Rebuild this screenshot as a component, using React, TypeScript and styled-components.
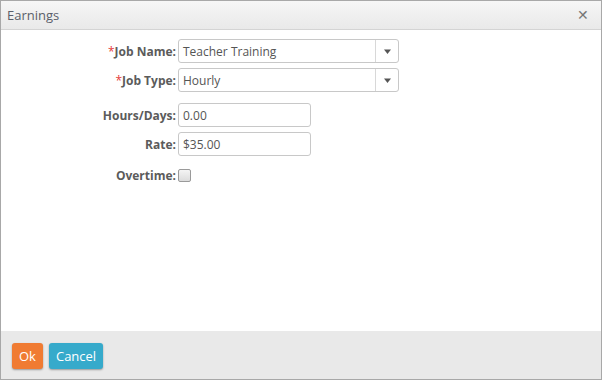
import React from 'react';
import styled, { createGlobalStyle } from 'styled-components';

const GlobalStyle = createGlobalStyle`
  html, body {
    margin: 0;
    padding: 0;
    background: #fff;
  }
  body {
    font-family: "Open Sans", "Liberation Sans", sans-serif;
  }
`;

const Dialog = styled.div`
  box-sizing: border-box;
  width: 602px;
  height: 380px;
  border: 1px solid #a8a8a8;
  display: flex;
  flex-direction: column;
  background: #fff;
`;

const Header = styled.div`
  height: 28px;
  flex: none;
  display: flex;
  align-items: center;
  padding: 0 12px 0 6px;
  background: linear-gradient(#f6f6f6, #e9e9e9);
  border-bottom: 1px solid #d4d4d4;
`;

const Title = styled.div`
  font-size: 13px;
  color: #5a5f6a;
  margin-right: auto;
`;

const Close = styled.div`
  font-size: 14px;
  color: #777;
  line-height: 1;
`;

const Body = styled.div`
  flex: 1;
  padding-top: 9px;
`;

const Form = styled.div`
  display: grid;
  grid-template-columns: 175px auto;
  column-gap: 2px;
  align-items: center;
`;

const Label = styled.label<{ $gap?: number }>`
  text-align: right;
  font-size: 12px;
  font-weight: 700;
  color: #5b5b5b;
  margin-top: ${(p) => p.$gap ?? 0}px;
`;

const Req = styled.span`
  color: #e53a3a;
  font-weight: 400;
`;

const Cell = styled.div<{ $gap?: number }>`
  display: flex;
  margin-top: ${(p) => p.$gap ?? 0}px;
`;

const Select = styled.div`
  box-sizing: border-box;
  width: 221px;
  height: 24px;
  border: 1px solid #c8c8c8;
  border-radius: 3px;
  display: flex;
  align-items: stretch;
  background: #fff;
`;

const SelectText = styled.div`
  flex: 1;
  font-size: 12px;
  color: #555;
  padding-left: 4px;
  display: flex;
  align-items: center;
`;

const Arrow = styled.div`
  width: 22px;
  border-left: 1px solid #d8d8d8;
  display: flex;
  align-items: center;
  justify-content: center;
`;

const Input = styled.div`
  box-sizing: border-box;
  width: 133px;
  height: 24px;
  border: 1px solid #c8c8c8;
  border-radius: 3px;
  font-size: 12px;
  color: #555;
  padding-left: 4px;
  display: flex;
  align-items: center;
`;

const Check = styled.div`
  box-sizing: border-box;
  width: 13px;
  height: 13px;
  border: 1px solid #9a9a9a;
  border-radius: 2px;
  background: linear-gradient(#f4f4f4, #dcdcdc);
`;

const Footer = styled.div`
  height: 48px;
  flex: none;
  background: #e9e9e9;
  display: flex;
  align-items: center;
  gap: 6px;
  padding: 0 11px;
`;

const Button = styled.button<{ $color: string }>`
  height: 26px;
  border: none;
  border-radius: 3px;
  background: ${(p) => p.$color};
  color: #fff;
  font-family: "Open Sans", "Liberation Sans", sans-serif;
  font-size: 13px;
  font-weight: 400;
  padding: 0 7px;
  box-shadow: 0 1px 2px rgba(0, 0, 0, 0.35);
  margin-top: 2px;
`;

const Caret = () => (
  <svg width="7" height="5" viewBox="0 0 7 5">
    <path d="M0 0.5h7L3.5 5z" fill="#555" />
  </svg>
);

export default function App() {
  return (
    <>
      <GlobalStyle />
      <Dialog>
        <Header>
          <Title>Earnings</Title>
          <Close>✕</Close>
        </Header>
        <Body>
          <Form>
            <Label>
              <Req>*</Req>Job Name:
            </Label>
            <Cell>
              <Select>
                <SelectText>Teacher Training</SelectText>
                <Arrow>
                  <Caret />
                </Arrow>
              </Select>
            </Cell>
            <Label $gap={5}>
              <Req>*</Req>Job Type:
            </Label>
            <Cell $gap={5}>
              <Select>
                <SelectText>Hourly</SelectText>
                <Arrow>
                  <Caret />
                </Arrow>
              </Select>
            </Cell>
            <Label $gap={11}>Hours/Days:</Label>
            <Cell $gap={11}>
              <Input>0.00</Input>
            </Cell>
            <Label $gap={5}>Rate:</Label>
            <Cell $gap={5}>
              <Input>$35.00</Input>
            </Cell>
            <Label $gap={11}>Overtime:</Label>
            <Cell $gap={11}>
              <Check />
            </Cell>
          </Form>
        </Body>
        <Footer>
          <Button $color="#f07b32">Ok</Button>
          <Button $color="#36aacb">Cancel</Button>
        </Footer>
      </Dialog>
    </>
  );
}
